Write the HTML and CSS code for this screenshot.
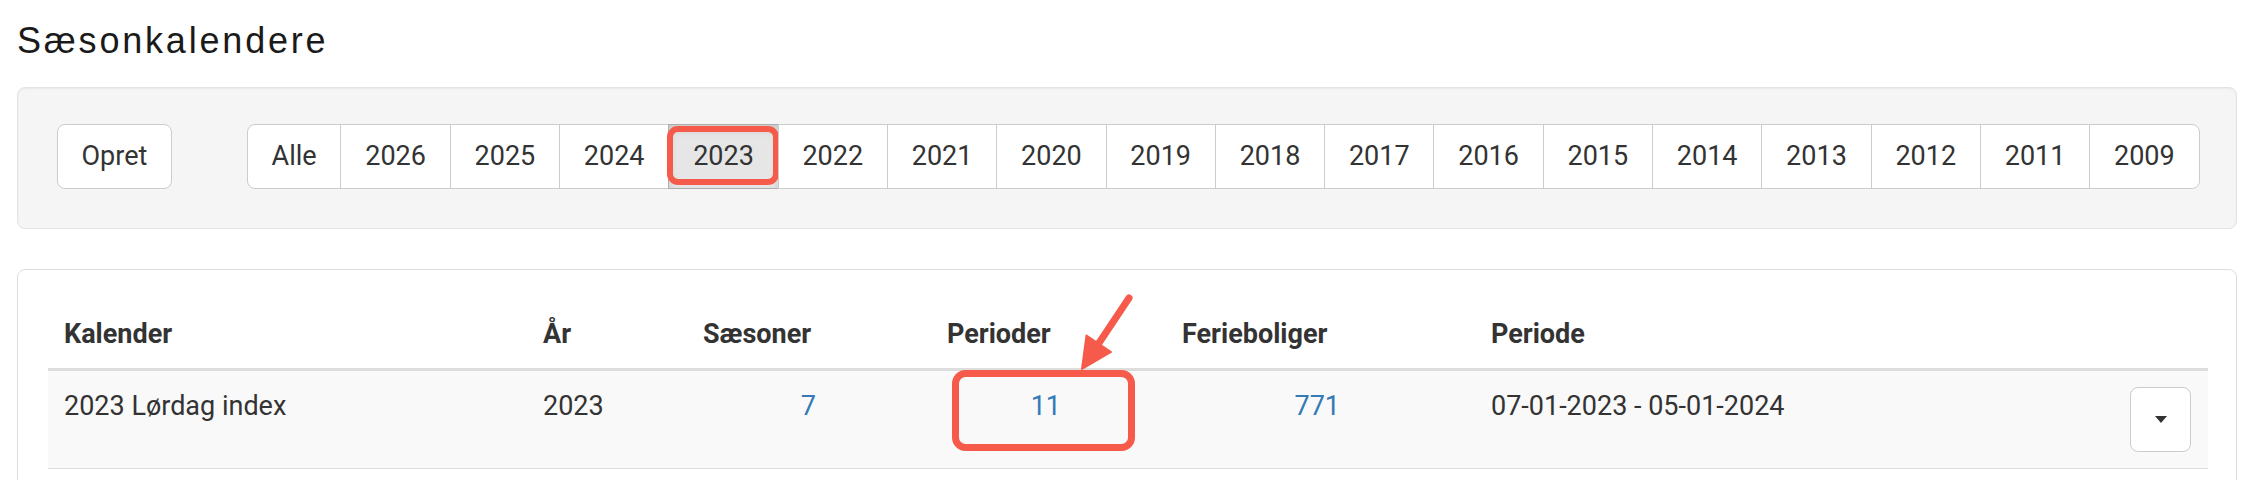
FILE: index.html
```html
<!DOCTYPE html>
<html lang="da">
<head>
<meta charset="utf-8">
<title>Sæsonkalendere</title>
<link rel="stylesheet" href="styles.css">
</head>
<body>
<div class="page">
  <h3 class="title">Sæsonkalendere</h3>

  <div class="well">
    <button class="btn">Opret</button>
    <div class="btn-group">
      <button class="btn">Alle</button>
      <button class="btn">2026</button>
      <button class="btn">2025</button>
      <button class="btn">2024</button>
      <button class="btn active">2023<span class="mark"></span></button>
      <button class="btn">2022</button>
      <button class="btn">2021</button>
      <button class="btn">2020</button>
      <button class="btn">2019</button>
      <button class="btn">2018</button>
      <button class="btn">2017</button>
      <button class="btn">2016</button>
      <button class="btn">2015</button>
      <button class="btn">2014</button>
      <button class="btn">2013</button>
      <button class="btn">2012</button>
      <button class="btn">2011</button>
      <button class="btn">2009</button>
    </div>
  </div>

  <div class="panel">
    <table class="table">
      <thead>
        <tr>
          <th class="c-kal">Kalender</th>
          <th class="c-aar">År</th>
          <th class="c-saes">Sæsoner</th>
          <th class="c-per">Perioder</th>
          <th class="c-fer">Ferieboliger</th>
          <th class="c-periode">Periode</th>
          <th class="c-act"></th>
        </tr>
      </thead>
      <tbody>
        <tr>
          <td class="c-kal">2023 Lørdag index</td>
          <td class="c-aar">2023</td>
          <td class="c-saes num"><a href="#">7</a></td>
          <td class="c-per num annotated"><a href="#">11</a>
            <svg class="callout" width="210" height="175" viewBox="0 0 210 175">
              <rect x="15.5" y="87.5" width="176" height="74" rx="10" ry="10" fill="none" stroke="#f55a4a" stroke-width="7"/>
              <line x1="189" y1="12" x2="157" y2="60" stroke="#f55a4a" stroke-width="7" stroke-linecap="round"/>
              <polygon points="142,83 146.5,49.5 171,66" fill="#f55a4a" stroke="#f55a4a" stroke-width="2" stroke-linejoin="round"/>
            </svg>
          </td>
          <td class="c-fer num"><a href="#">771</a></td>
          <td class="c-periode">07-01-2023 - 05-01-2024</td>
          <td class="c-act"><button class="btn btn-caret"><span class="caret"></span></button></td>
        </tr>
      </tbody>
    </table>
  </div>
</div>
</body>
</html>
```

FILE: styles.css
```css
* { box-sizing: border-box; }

html, body {
  margin: 0;
  padding: 0;
  background: #ffffff;
}

body {
  font-family: Roboto, "Liberation Sans", Arial, sans-serif;
  color: #333333;
}

.page {
  padding: 0 17px;
}

.title {
  margin: 21px 0 26px 0;
  font-family: "Liberation Sans", Arial, sans-serif;
  font-weight: 400;
  font-size: 36px;
  line-height: 39.6px;
  letter-spacing: 2.8px;
  color: #1a1a1a;
}

.well {
  display: flex;
  align-items: center;
  gap: 75px;
  background: #f5f5f5;
  border: 1px solid #e3e3e3;
  border-radius: 8px;
  box-shadow: inset 0 1px 2px rgba(0, 0, 0, 0.05);
  padding: 36px 38px 39px 39px;
}

.btn {
  position: relative;
  display: inline-flex;
  align-items: center;
  justify-content: center;
  height: 65px;
  padding: 0 23.5px;
  margin: 0;
  font-family: Roboto, "Liberation Sans", Arial, sans-serif;
  font-size: 27px;
  line-height: 38.6px;
  color: #333333;
  background: #ffffff;
  border: 1px solid #cccccc;
  border-radius: 8px;
  cursor: pointer;
}

.btn-group {
  display: flex;
}

.btn-group .btn {
  border-radius: 0;
  margin-left: -1px;
  padding: 0 23.8px;
}

.btn-group .btn:first-child {
  margin-left: 0;
  border-radius: 8px 0 0 8px;
}

.btn-group .btn:last-child {
  border-radius: 0 8px 8px 0;
}

.btn.active {
  background: #e6e6e6;
  border-color: #adadad;
  box-shadow: inset 0 5px 9px rgba(0, 0, 0, 0.125);
}

.mark {
  position: absolute;
  top: 1px;
  left: -2px;
  right: -1px;
  bottom: 3px;
  border: 6px solid #f55a4a;
  border-radius: 11px;
}

.panel {
  margin-top: 40px;
  background: #ffffff;
  border: 1px solid #dddddd;
  border-radius: 8px;
  padding: 29px 28px 40px 30px;
}

.table {
  width: 100%;
  table-layout: fixed;
  border-collapse: collapse;
  border-spacing: 0;
}

.table th,
.table td {
  padding: 16px 16px 15px 16px;
  font-size: 27px;
  line-height: 38.6px;
  text-align: left;
  vertical-align: top;
  white-space: nowrap;
}

.table th {
  font-weight: 700;
  color: #333333;
  border-bottom: 3px solid #dddddd;
}

.table td {
  font-weight: 400;
  color: #333333;
  background: #f9f9f9;
  border-bottom: 1px solid #dddddd;
  padding-bottom: 16px;
}

.table a {
  color: #337ab7;
  text-decoration: none;
}

.c-kal { width: 479px; }
.c-aar { width: 163px; }
.c-saes { width: 142px; }
.c-per { width: 245px; }
.c-fer { width: 398px; }
.c-periode { width: 625px; }
.c-act { width: 108px; }

.table th.c-saes { padding-left: 13px; }
.table th.c-per { padding-left: 115px; }
.table th.c-fer { padding-left: 105px; }

.table td.num { text-align: right; }
.table td.c-fer { padding-right: 135px; }
.table .c-act { text-align: right; padding-right: 17px; }

.annotated {
  position: relative;
}

.callout {
  position: absolute;
  left: 108px;
  top: -85px;
  overflow: visible;
  pointer-events: none;
}

.btn-caret {
  width: 61px;
  padding: 0;
  vertical-align: top;
}

.caret {
  display: block;
  width: 0;
  height: 0;
  border-top: 7px solid #333333;
  border-left: 6px solid transparent;
  border-right: 6px solid transparent;
}
```
